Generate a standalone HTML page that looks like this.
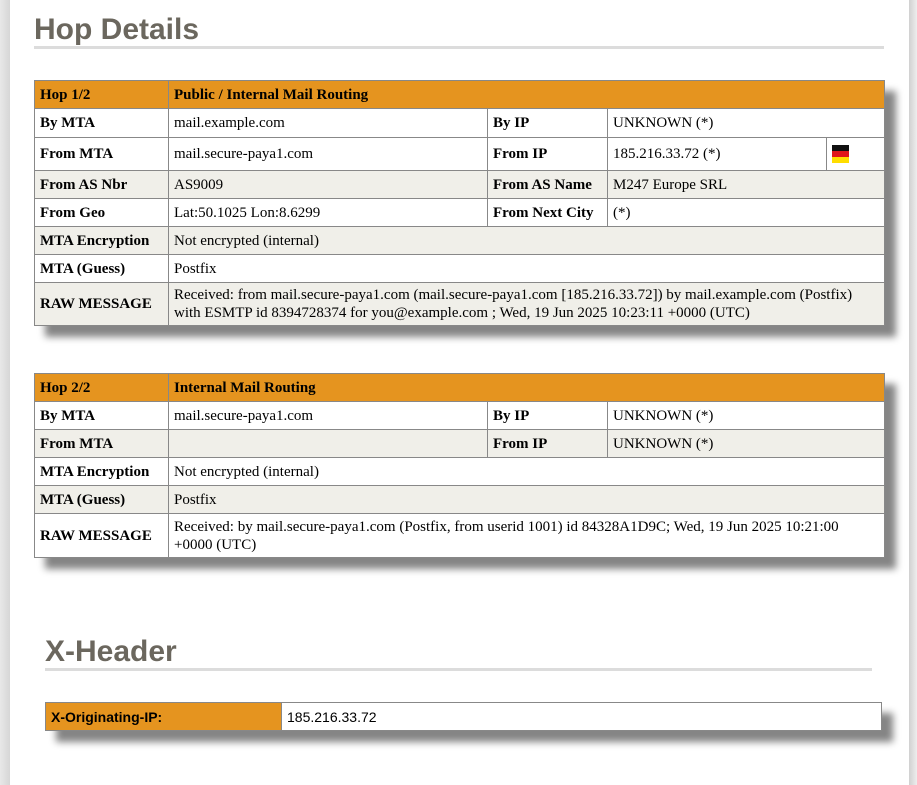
<!DOCTYPE html>
<html><head><meta charset="utf-8"><style>
html,body{margin:0;padding:0;width:917px;height:785px;overflow:hidden;background:#fff;}
body{position:relative;font-family:"Liberation Serif",serif;font-size:15px;color:#000;}
.ls{position:absolute;left:0;top:0;width:10px;height:785px;background:linear-gradient(90deg,#e8e8e8,#d6d6d6);}
.rs{position:absolute;left:909px;top:0;width:8px;height:785px;background:linear-gradient(90deg,#d0d0d0,#eee);}
h2{position:absolute;margin:0;font-family:"Liberation Sans",sans-serif;font-weight:bold;color:#6b675e;font-size:30px;line-height:30px;}
.ln{position:absolute;height:3px;background:#dcdcdc;}
table{position:absolute;border-collapse:collapse;table-layout:fixed;box-shadow:11px 11px 7px #858585;}
td{border:1px solid #888;padding:0 5px;vertical-align:middle;line-height:18px;}
tr.h td{background:#e5941f;font-weight:bold;}
tr.g td{background:#f0efe9;}
td.b{font-weight:bold;}
.flag{display:inline-block;width:17px;height:18px;vertical-align:middle;background:linear-gradient(#111 0 33%,#e0151b 33% 66%,#ffdd00 66%);}
</style></head><body>
<div class="ls"></div><div class="rs"></div>
<h2 style="left:34px;top:15px;">Hop Details</h2>
<div class="ln" style="left:34px;top:46px;width:850px;"></div>

<table style="left:34px;top:80px;width:850px;">
<colgroup><col style="width:134px"><col style="width:319px"><col style="width:120px"><col style="width:219px"><col style="width:58px"></colgroup>
<tr class="h" style="height:28px"><td>Hop 1/2</td><td colspan="4">Public / Internal Mail Routing</td></tr>
<tr style="height:29px"><td class="b">By MTA</td><td>mail.example.com</td><td class="b">By IP</td><td colspan="2">UNKNOWN (*)</td></tr>
<tr style="height:33px"><td class="b">From MTA</td><td>mail.secure-paya1.com</td><td class="b">From IP</td><td>185.216.33.72 (*)</td><td><span class="flag"></span></td></tr>
<tr class="g" style="height:28px"><td class="b">From AS Nbr</td><td>AS9009</td><td class="b">From AS Name</td><td colspan="2">M247 Europe SRL</td></tr>
<tr style="height:28px"><td class="b">From Geo</td><td>Lat:50.1025 Lon:8.6299</td><td class="b">From Next City</td><td colspan="2">(*)</td></tr>
<tr class="g" style="height:28px"><td class="b">MTA Encryption</td><td colspan="4">Not encrypted (internal)</td></tr>
<tr style="height:28px"><td class="b">MTA (Guess)</td><td colspan="4">Postfix</td></tr>
<tr class="g" style="height:43px"><td class="b">RAW MESSAGE</td><td colspan="4">Received: from mail.secure-paya1.com (mail.secure-paya1.com [185.216.33.72]) by mail.example.com (Postfix) with ESMTP id 8394728374 for you@example.com ; Wed, 19 Jun 2025 10:23:11 +0000 (UTC)</td></tr>
</table>

<table style="left:34px;top:373px;width:850px;">
<colgroup><col style="width:134px"><col style="width:319px"><col style="width:120px"><col style="width:277px"></colgroup>
<tr class="h" style="height:28px"><td>Hop 2/2</td><td colspan="3">Internal Mail Routing</td></tr>
<tr style="height:28px"><td class="b">By MTA</td><td>mail.secure-paya1.com</td><td class="b">By IP</td><td>UNKNOWN (*)</td></tr>
<tr class="g" style="height:28px"><td class="b">From MTA</td><td></td><td class="b">From IP</td><td>UNKNOWN (*)</td></tr>
<tr style="height:28px"><td class="b">MTA Encryption</td><td colspan="3">Not encrypted (internal)</td></tr>
<tr class="g" style="height:28px"><td class="b">MTA (Guess)</td><td colspan="3">Postfix</td></tr>
<tr style="height:44px"><td class="b">RAW MESSAGE</td><td colspan="3">Received: by mail.secure-paya1.com (Postfix, from userid 1001) id 84328A1D9C; Wed, 19 Jun 2025 10:21:00 +0000 (UTC)</td></tr>
</table>

<h2 style="left:45px;top:637px;">X-Header</h2>
<div class="ln" style="left:45px;top:668px;width:827px;"></div>

<table style="left:45px;top:702px;width:836px;font-family:'Liberation Sans',sans-serif;font-size:14px;">
<colgroup><col style="width:236px"><col style="width:600px"></colgroup>
<tr style="height:28px"><td style="background:#e5941f;font-weight:bold;">X-Originating-IP:</td><td>185.216.33.72</td></tr>
</table>
</body></html>
